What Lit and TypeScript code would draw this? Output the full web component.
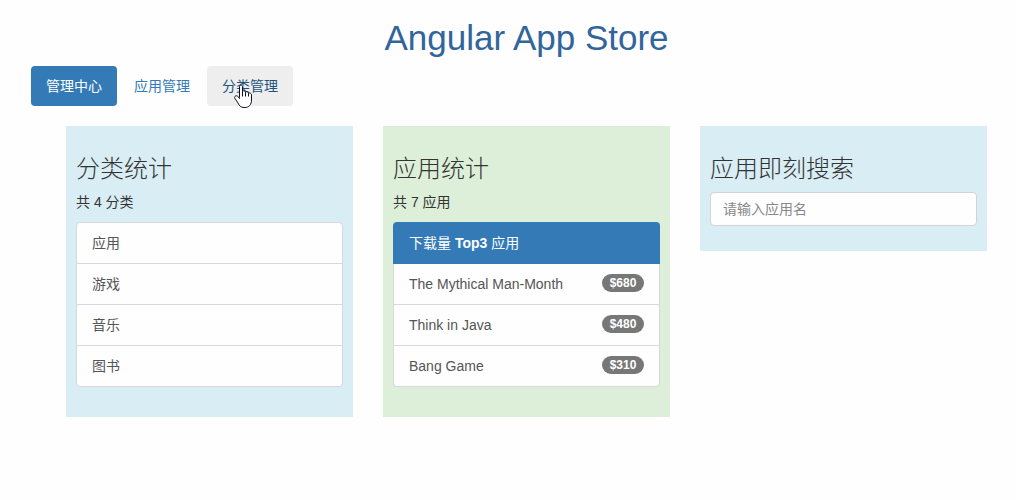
import { LitElement, html, css } from "lit";
import { customElement, state } from "lit/decorators.js";
import { classMap } from "lit/directives/class-map.js";

interface App {
  name: string;
  price: number;
}

@customElement("app-root")
export class AppRoot extends LitElement {
  @state() private active = "管理中心";

  private tabs = ["管理中心", "应用管理", "分类管理"];
  private hovered = "分类管理";
  private categories = ["应用", "游戏", "音乐", "图书"];
  private total = 7;
  private top: App[] = [
    { name: "The Mythical Man-Month", price: 680 },
    { name: "Think in Java", price: 480 },
    { name: "Bang Game", price: 310 },
  ];

  static styles = css`
    :host {
      display: block;
      box-sizing: border-box;
      min-height: 100vh;
      padding: 18px 29px 20px 31px;
      background: #fefefe;
      color: #333;
      font-family: "Liberation Sans", "Noto Sans CJK SC", sans-serif;
      font-size: 14px;
      font-weight: 400;
      line-height: 20px;
    }
    * {
      box-sizing: border-box;
    }
    h1 {
      margin: 0 0 8px 35px;
      text-align: center;
      font-size: 35px;
      font-weight: 400;
      line-height: 40px;
      color: #31659b;
    }
    nav {
      display: flex;
      gap: 2px;
      margin-bottom: 20px;
    }
    .pill {
      position: relative;
      padding: 10px 15px;
      border-radius: 4px;
      color: #337ab7;
      text-decoration: none;
    }
    .pill.hover {
      background: #eee;
      color: #23527c;
    }
    .pill.active {
      background: #337ab7;
      color: #fff;
    }
    .pointer {
      position: absolute;
      left: 27px;
      top: 18px;
      width: 19px;
      height: 25px;
    }
    main {
      display: grid;
      grid-template-columns: repeat(3, minmax(0, 1fr));
      align-items: start;
      gap: 30px;
      margin-left: 35px;
    }
    .panel {
      padding: 30px 10px 10px;
      background: #d9edf5;
    }
    .panel.green {
      background: #ddefd8;
    }
    h3 {
      margin: 0 0 10px;
      font-size: 24px;
      font-weight: 300;
      line-height: 26px;
    }
    p {
      margin: 0 0 10px;
    }
    ul {
      list-style: none;
      margin: 0 0 20px;
      padding: 0;
      border: 1px solid #d8d8d8;
      border-radius: 4px;
      background: #fefefe;
      overflow: hidden;
      color: #555;
    }
    li {
      display: flex;
      align-items: flex-start;
      justify-content: space-between;
      padding: 10px 15px;
    }
    li + li {
      border-top: 1px solid #d8d8d8;
    }
    .top {
      margin-bottom: 0;
      padding: 11px 16px;
      border-radius: 4px 4px 0 0;
      background: #337ab7;
      color: #fff;
    }
    .top strong {
      font-family: "Liberation Sans", sans-serif;
      font-weight: 700;
    }
    .top + ul {
      border-top: 0;
      border-radius: 0 0 4px 4px;
    }
    .badge {
      min-width: 42px;
      padding: 3px 7px;
      border-radius: 10px;
      background: #777;
      color: #fff;
      font-size: 12px;
      font-weight: 700;
      line-height: 12px;
      text-align: center;
    }
    input {
      display: block;
      width: 100%;
      height: 34px;
      margin: 0 0 15px;
      padding: 6px 12px;
      border: 1px solid #d3d3d3;
      border-radius: 4px;
      background: #fefefe;
      color: #555;
      font: inherit;
    }
    input::placeholder {
      color: #888;
      opacity: 1;
    }
  `;

  private pointer() {
    return html`<svg class="pointer" viewBox="0 0 19 25" aria-hidden="true">
      <path
        d="M5.5 13.5V2.6C5.5 .6 8.5 .6 8.5 2.6V7.6C9 6.4 11.5 6.5 11.5 8.3C12.3 7.3 14.5 7.6 14.5 9.3C15.6 8.6 17.5 9.2 17.5 10.8V16C17.5 20.5 15 23.5 11 23.5H10C7 23.5 5.2 21.8 4 19L.8 14.2C-.2 12.4 2.4 11 3.8 12.3L5.5 14.5Z"
        fill="#fff"
        stroke="#111122"
        stroke-linejoin="round"
      />
      <path d="M8.5 7.5V12.5M11.5 8.3V12.5M14.5 9.3V12.5" fill="none" stroke="#111122" />
    </svg>`;
  }

  private select(e: Event, tab: string) {
    e.preventDefault();
    this.active = tab;
  }

  render() {
    return html`
      <h1>Angular App Store</h1>
      <nav>
        ${this.tabs.map(
          (tab) => html`<a
            href="#"
            class=${classMap({ pill: true, active: tab === this.active, hover: tab === this.hovered })}
            @click=${(e: Event) => this.select(e, tab)}
            >${tab}${tab === this.hovered ? this.pointer() : null}</a
          >`
        )}
      </nav>
      <main>
        <section class="panel">
          <h3>分类统计</h3>
          <p>共 ${this.categories.length} 分类</p>
          <ul>
            ${this.categories.map((c) => html`<li>${c}</li>`)}
          </ul>
        </section>
        <section class="panel green">
          <h3>应用统计</h3>
          <p>共 ${this.total} 应用</p>
          <div class="top">下载量 <strong>Top3</strong> 应用</div>
          <ul>
            ${this.top.map(
              (a) => html`<li><span>${a.name}</span><span class="badge">$${a.price}</span></li>`
            )}
          </ul>
        </section>
        <section class="panel">
          <h3><label for="search">应用即刻搜索</label></h3>
          <input id="search" type="text" placeholder="请输入应用名" />
        </section>
      </main>
    `;
  }
}
